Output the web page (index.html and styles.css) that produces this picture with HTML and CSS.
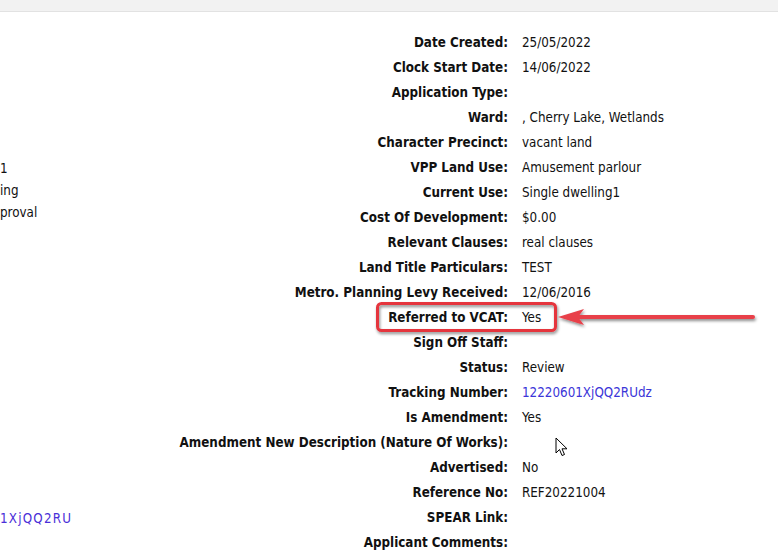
FILE: index.html
```html
<!DOCTYPE html>
<html lang="en">
<head>
  <meta charset="UTF-8">
  <title>Application Details</title>
  <link rel="stylesheet" href="styles.css">
</head>
<body>

  <div class="topbar"></div>

  <div class="page">
    <div class="side">
      <div class="side-item first">1</div>
      <div class="side-item">ing</div>
      <div class="side-item">proval</div>
      <div class="side-item last"><a href="#" class="ref-link">1XjQQ2RU</a></div>
    </div>

    <div class="details">
      <div class="label">Date Created:</div><div class="value">25/05/2022</div>
      <div class="label">Clock Start Date:</div><div class="value">14/06/2022</div>
      <div class="label">Application Type:</div><div class="value"></div>
      <div class="label">Ward:</div><div class="value">, Cherry Lake, Wetlands</div>
      <div class="label">Character Precinct:</div><div class="value">vacant land</div>
      <div class="label">VPP Land Use:</div><div class="value">Amusement parlour</div>
      <div class="label">Current Use:</div><div class="value">Single dwelling1</div>
      <div class="label">Cost Of Development:</div><div class="value">$0.00</div>
      <div class="label">Relevant Clauses:</div><div class="value">real clauses</div>
      <div class="label">Land Title Particulars:</div><div class="value">TEST</div>
      <div class="label">Metro. Planning Levy Received:</div><div class="value">12/06/2016</div>
      <div class="label">Referred to VCAT:</div><div class="value">Yes</div>
      <div class="label">Sign Off Staff:</div><div class="value"></div>
      <div class="label">Status:</div><div class="value">Review</div>
      <div class="label">Tracking Number:</div><div class="value"><a href="#">12220601XjQQ2RUdz</a></div>
      <div class="label">Is Amendment:</div><div class="value">Yes</div>
      <div class="label">Amendment New Description (Nature Of Works):</div><div class="value"></div>
      <div class="label">Advertised:</div><div class="value">No</div>
      <div class="label">Reference No:</div><div class="value">REF20221004</div>
      <div class="label">SPEAR Link:</div><div class="value"></div>
      <div class="label">Applicant Comments:</div><div class="value"></div>
    </div>

    <!-- annotation: box + arrow over the VCAT row -->
    <svg class="callout" width="778" height="60" viewBox="0 0 778 60">
      <defs>
        <filter id="shadow" x="-10%" y="-40%" width="120%" height="180%">
          <feDropShadow dx="1" dy="2" stdDeviation="1.5" flood-color="#000" flood-opacity="0.45"/>
        </filter>
      </defs>
      <rect x="377.5" y="6.5" width="178" height="27" rx="4" fill="none" stroke="#e5343c" stroke-width="3" filter="url(#shadow)"/>
      <g filter="url(#shadow)">
        <line x1="574" y1="20" x2="753" y2="20" stroke="#e8404a" stroke-width="4" stroke-linecap="round"/>
        <polygon points="558,20 584,12 578,20 584,28" fill="#e8404a"/>
      </g>
    </svg>

    <svg class="cursor" width="14" height="22" viewBox="0 0 14 22">
      <path d="M1 1 L1 16 L4.5 12.5 L7 18.5 L9.5 17.5 L7 11.8 L12 11.8 Z" fill="#fff" stroke="#000" stroke-width="1" stroke-linejoin="round"/>
    </svg>
  </div>

</body>
</html>
```

FILE: styles.css
```css
body {
  margin: 0;
  font-family: "DejaVu Sans Condensed", "DejaVu Sans", sans-serif;
  font-size: 13.3px;
  color: #111;
  background: #fff;
  overflow: hidden;
}
a {
  color: #3b35d8;
  text-decoration: none;
}
.topbar {
  height: 11px;
  background: #f2f2f2;
  border-bottom: 1px solid #e2e2e2;
}
.page {
  position: relative;
  display: flex;
  padding-top: 18px;
}
.side {
  width: 160px;
  flex-shrink: 0;
  line-height: 22px;
}
.side-item.first {
  margin-top: 128px;
}
.side-item.last {
  margin-top: 284px;
}
.side .ref-link {
  color: #4a2fd8;
  letter-spacing: 1.2px;
}
.details {
  display: grid;
  grid-template-columns: 348px 1fr;
  column-gap: 14px;
  line-height: 25px;
}
.label {
  font-weight: bold;
  text-align: right;
  white-space: nowrap;
}
.value {
  white-space: nowrap;
}
.callout {
  position: absolute;
  left: 0;
  top: 285px;
  pointer-events: none;
}
.cursor {
  position: absolute;
  left: 555px;
  top: 425px;
}
```
